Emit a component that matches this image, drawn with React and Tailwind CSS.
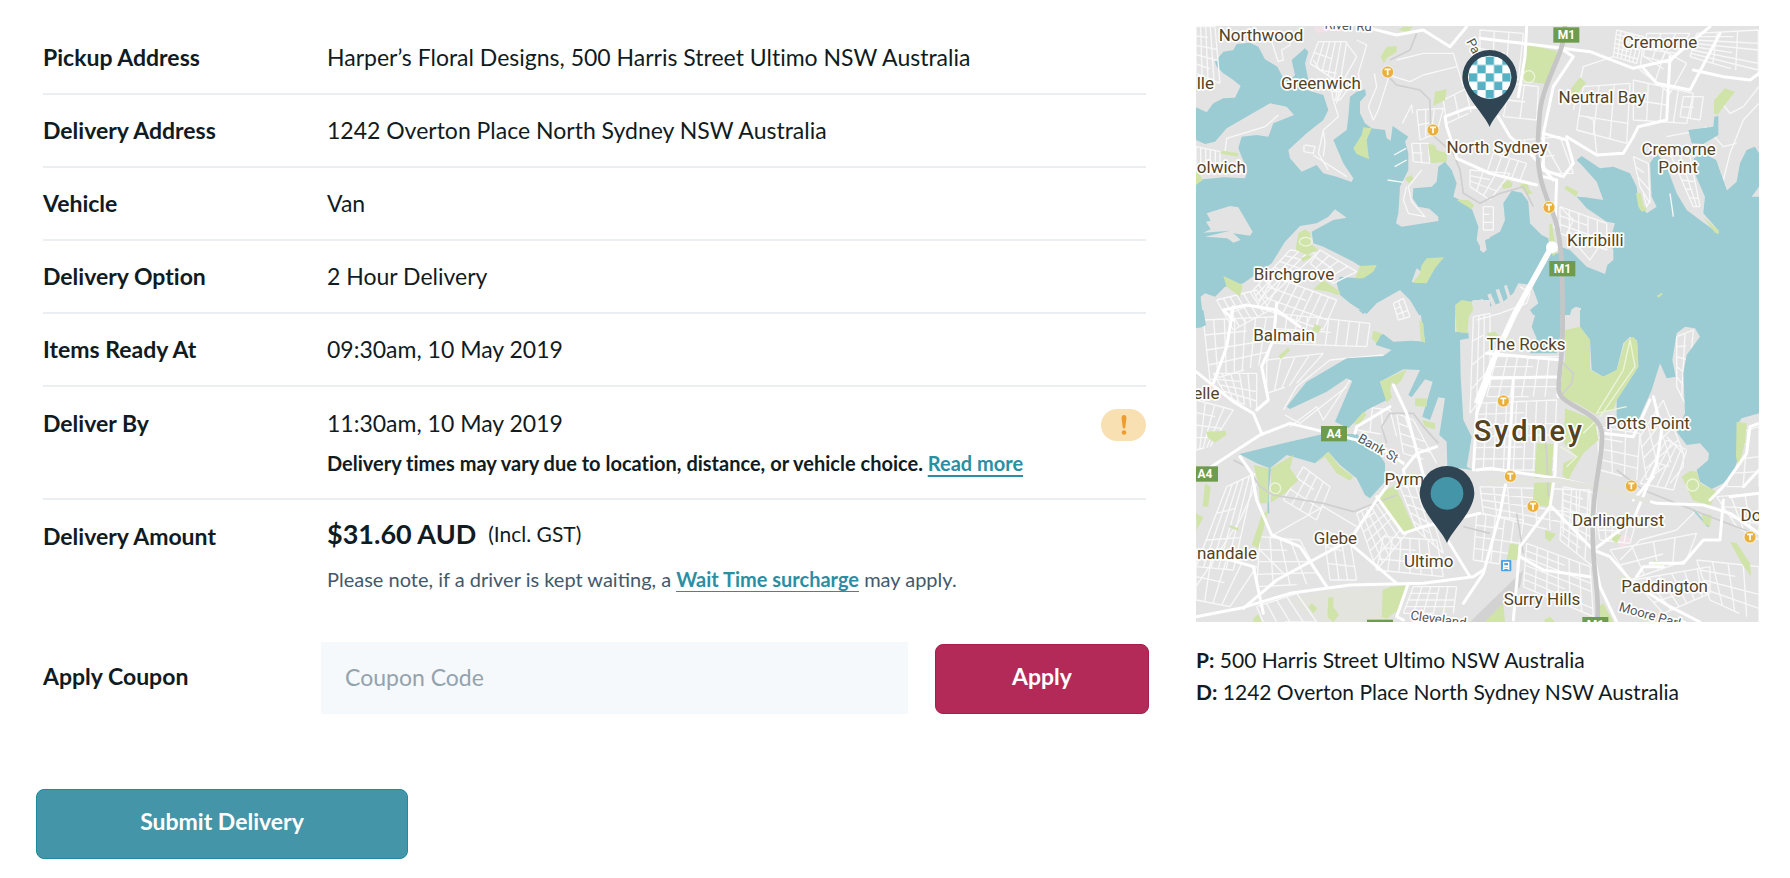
import React, { useState } from "react";

const details = [
  { label: "Pickup Address", value: "Harper’s Floral Designs, 500 Harris Street Ultimo NSW Australia" },
  { label: "Delivery Address", value: "1242 Overton Place North Sydney NSW Australia" },
  { label: "Vehicle", value: "Van" },
  { label: "Delivery Option", value: "2 Hour Delivery" },
  { label: "Items Ready At", value: "09:30am, 10 May 2019" },
];

// The map is split in four tiles: north west, north east, south west, south east
const tiles = [
  {
    key: "nw",
    transform: "translate(0 0)",
    land: [
      "18,18 18,262 50,277 70,250 100,235 135,233 152,198 130,180 100,160 80,140 75,125 100,95 130,90 140,72 180,68 205,80 225,118 262,140 280,175 300,180 315,165 305,120 345,85 355,95 345,130 355,180 350,210 400,225 415,270 400,300 350,340 295,390 300,415 335,455 380,435 400,460 440,470 485,486 490,475 460,430 430,360 470,330 475,290 480,230 500,215 525,208 528,225 510,245 510,280 525,310 545,325 585,330 590,355 602,362 608,318 655,350 645,365 655,400 655,450 640,480 630,500 625,580 618,610 635,620 745,603 745,590 718,566 685,560 668,535 670,505 725,500 740,485 745,440 765,425 785,450 800,490 790,530 820,545 845,565 865,620 860,660 880,698 890,690 885,660 900,655 900,18",
      "18,360 45,372 75,365 110,325 240,250 290,260 312,285 250,310 235,350 200,345 155,350 145,385 155,410 172,450 165,475 100,472 18,480",
      "50,580 120,558 145,562 188,635 180,647 130,640 152,660 130,668 112,655 45,650 120,632 40,638 62,628 48,605 62,602",
      "32,830 45,820 75,830 105,800 160,790 245,730 285,665 330,618 380,610 415,590 435,568 470,593 430,600 365,635 370,670 400,680 440,700 490,725 505,735 530,745 510,775 450,770 440,790 450,825 480,850 530,882 560,850 630,810 660,840 690,890 690,930 45,930 35,860",
      "665,785 680,745 700,760 690,790",
      "795,930 795,885 850,840 900,840 900,930",
    ],
    water: [],
    parks: [
      "572,110 590,80 620,78 620,95 590,115 582,130",
      "735,215 770,208 765,240 730,258",
      "490,385 515,345 520,322 545,325 530,360 537,418 500,402",
      "714,372 735,375 740,390 772,400 770,425 722,430",
      "800,540 835,540 852,555 845,568",
      "88,400 100,392 145,400 142,410",
      "18,440 38,480 18,495",
      "645,475 665,465 670,478 655,490",
      "318,680 325,640 345,628 362,640 362,670 385,690 350,705 318,690",
      "332,715 355,705 365,712 340,725",
      "100,768 158,795 150,830 110,800",
      "495,775 510,738 560,735 550,755 520,775",
      "370,808 400,780 450,815 445,826 415,815",
      "668,788 690,760 695,735 710,715 762,712 735,745 710,790",
      "797,900 795,855 815,840 845,845 850,870 835,890",
      "625,30 640,20 668,20 655,35",
    ],
  },
  {
    key: "ne",
    transform: "translate(840 0)",
    land: [
      "30,18 30,690 40,698 45,660 90,635 105,600 100,550 125,512 155,518 175,545 180,610 215,645 235,655 240,700 265,700 270,680 300,690 350,740 405,762 412,735 430,720 430,690 420,660 435,610 410,605 350,565 320,530 345,532 400,540 380,485 335,435 320,420 335,408 390,445 430,440 480,460 500,500 505,545 530,580 560,560 545,530 540,430 560,400 590,440 620,520 650,570 690,600 745,640 745,630 700,580 705,530 670,450 672,415 700,400 738,420 770,512 800,485 810,430 830,390 855,380 867,400 867,500 845,530 900,530 900,18",
      "30,930 30,870 100,845 130,820 145,790 185,795 205,850 180,870 200,900 195,930",
      "28,840 38,836 50,870 40,878",
      "52,824 62,820 80,860 70,870",
      "77,810 87,806 102,848 92,856",
      "102,798 110,794 122,830 114,838",
      "300,930 300,885 305,868 318,860 333,865 333,890 325,930",
    ],
    water: [
      "655,330 730,320 733,290 745,288 745,345 700,372 665,370",
      "840,525 845,480 855,380 835,395 812,430 803,485 772,515 738,420 705,405 675,420 672,450 706,530 702,580 747,632 840,640",
    ],
    parks: [
      "165,90 175,75 258,92 262,105 230,192 155,182",
      "295,215 330,172 348,188 320,225",
      "95,495 115,480 128,490 125,502 100,506",
      "148,495 172,488 178,510 188,520 170,525",
      "282,505 290,497 325,515 318,530",
      "498,520 512,518 520,555 532,570 515,575 505,560",
      "732,240 765,205 795,215 760,260 742,285 732,280",
      "238,612 246,612 260,700 248,708 238,660",
      "560,828 575,818 578,822 566,833",
      "700,592 745,630 747,642 735,638",
      "0,545 12,555 0,570",
    ],
  },
  {
    key: "sw",
    transform: "translate(0 870)",
    land: [],
    water: [
      "18,0 40,0 48,45 35,52 18,55",
      "505,0 535,0 520,12",
      "690,0 705,95 665,92 610,95 580,72 557,80 558,105 605,120 580,138 470,145 350,215 290,290 300,297 410,245 470,205 487,213 435,335 475,355 530,300 590,270 570,215 640,178 690,180 655,255 665,262 705,208 728,215 697,320 720,330 745,262 765,265 748,375 770,395 772,470 850,480 830,470 845,380 820,330 812,200 810,90 837,85 835,68 795,65 795,0",
      "148,432 280,400 400,372 500,372 560,420 585,460 585,515 540,565 525,555 500,505 450,465 415,425 375,460 290,435 240,475 200,460",
      "235,475 243,475 236,545 238,610 232,610",
      "612,835 640,830 628,852 616,856",
    ],
    parks: [
      "190,465 235,475 235,580 210,580 205,520",
      "243,475 310,435 300,475 325,510 285,550 243,578",
      "375,462 415,425 450,470 490,500 480,512 440,490 405,440",
      "555,560 615,525 675,660 645,672 620,650",
      "570,215 650,178 635,210 620,225 605,215 600,240 606,262 590,278",
      "675,265 710,265 710,290 675,288",
      "697,330 735,340 735,358 705,350",
      "490,340 520,305 530,315 505,345",
      "365,62 375,42 395,50 385,70",
      "266,138 295,112 300,122 272,148",
      "48,365 108,362 108,375 75,398 55,385",
      "545,85 550,62 575,70 560,100",
      "795,0 838,0 832,70 800,65",
      "688,30 700,40 705,100 692,90",
      "45,520 62,530 55,590 38,590",
      "18,610 40,622 20,660",
      "215,615 235,600 205,715 185,705",
      "118,645 145,655 145,662 118,652",
      "575,920 578,840 600,830 655,826 625,900 590,926",
      "355,890 365,880 382,895 370,910",
      "415,862 430,862 430,890 447,915 430,936 412,920",
      "190,925 205,912 215,936 190,936",
    ],
  },
  {
    key: "se",
    transform: "translate(840 870)",
    land: [],
    water: [
      "330,0 867,0 867,310 815,325 800,345 805,440 790,490 760,520 725,537 690,515 680,480 715,450 717,430 690,400 650,405 620,365 645,310 640,190 650,135 690,80 675,55 645,50 620,70 607,150 617,200 590,205 570,160 545,240 505,330 440,345 440,270 505,170 500,90 480,80 460,100 440,180 400,200 365,180 360,90 330,50",
      "200,0 272,0 272,70 260,130 180,130 200,85 185,50",
      "366,212 380,207 382,220 370,224",
      "672,598 718,650 712,650 670,602",
    ],
    parks: [
      "285,60 330,50 360,90 360,180 400,200 440,180 465,95 490,80 503,100 505,170 460,240 440,270 430,300 380,315 320,280 270,260 265,220 285,150",
      "285,295 375,330 385,390 340,430 310,480 295,510 277,495 280,460 320,440 282,400",
      "200,400 250,402 240,590 188,585",
      "635,500 660,482 680,485 690,520 740,545 720,590 668,570",
      "800,335 830,340 825,400 805,470 798,440",
      "50,70 75,65 90,80 60,90",
      "120,700 145,705 145,750 110,750",
      "225,660 258,672 240,695 225,685",
      "780,695 800,700 840,760 843,800 815,760",
      "695,610 725,615 720,650 700,640",
      "430,670 455,675 440,700 425,690",
      "550,750 580,760 575,770 555,768",
      "45,936 100,880 105,936",
      "222,930 240,920 255,936 225,936",
      "385,890 400,880 430,936 385,936",
    ],
  },
];

// Street blocks: four corners of a quad, then the number of streets each way
const blocks = [
  [18, 20, 75, 20, 90, 190, 18, 160, 4, 5],
  [385, 65, 470, 65, 450, 190, 360, 130, 5, 2],
  [420, 190, 490, 185, 450, 240, 430, 240, 3, 2],
  [665, 370, 715, 370, 720, 430, 670, 425, 2, 2],
  [680, 270, 760, 265, 740, 340, 690, 360, 3, 2],
  [760, 240, 860, 190, 880, 260, 770, 310, 3, 1],
  [840, 450, 960, 460, 900, 540, 840, 500, 3, 3],
  [300, 690, 380, 700, 210, 860, 190, 810, 3, 7],
  [390, 690, 500, 755, 430, 790, 360, 730, 4, 2],
  [250, 770, 440, 840, 400, 930, 200, 860, 8, 3],
  [80, 840, 200, 810, 240, 870, 130, 930, 6, 2],
  [610, 850, 640, 835, 660, 890, 625, 900, 2, 3],
  [18, 380, 90, 395, 90, 440, 18, 440, 5, 1],
  [870, 30, 1000, 40, 985, 180, 870, 140, 3, 2],
  [960, 190, 1045, 200, 1040, 300, 940, 290, 2, 2],
  [1280, 30, 1360, 50, 1340, 130, 1270, 110, 6, 6],
  [1370, 40, 1500, 40, 1440, 130, 1360, 110, 3, 3],
  [1520, 40, 1705, 30, 1705, 170, 1500, 110, 3, 7],
  [1180, 200, 1320, 190, 1310, 370, 1160, 330, 3, 3],
  [1330, 180, 1510, 220, 1490, 310, 1330, 300, 4, 2],
  [1360, 60, 1490, 130, 1440, 220, 1350, 150, 2, 2],
  [1480, 230, 1540, 230, 1530, 300, 1470, 290, 2, 2],
  [1440, 400, 1500, 410, 1530, 560, 1510, 560, 2, 6],
  [1330, 410, 1375, 430, 1380, 550, 1350, 500, 1, 3],
  [1110, 560, 1250, 610, 1250, 690, 1110, 640, 5, 3],
  [1000, 360, 1110, 350, 1150, 460, 1080, 460, 2, 2],
  [910, 400, 1010, 430, 990, 480, 890, 460, 4, 1],
  [880, 560, 910, 560, 910, 630, 880, 630, 1, 3],
  [40, 900, 260, 890, 230, 1030, 60, 1080, 7, 4],
  [70, 1060, 200, 1060, 200, 1170, 110, 1130, 5, 4],
  [260, 880, 540, 910, 530, 980, 250, 970, 9, 2],
  [230, 1020, 400, 1000, 320, 1090, 230, 1120, 4, 1],
  [18, 1140, 130, 1170, 60, 1280, 18, 1290, 4, 4],
  [110, 1400, 195, 1360, 130, 1650, 18, 1640, 5, 3],
  [18, 1600, 200, 1640, 120, 1760, 18, 1740, 4, 2],
  [210, 1550, 330, 1560, 400, 1690, 200, 1700, 4, 4],
  [340, 1340, 420, 1400, 380, 1500, 280, 1440, 4, 3],
  [400, 1530, 480, 1560, 500, 1680, 420, 1680, 3, 3],
  [500, 1480, 570, 1440, 650, 1540, 560, 1650, 5, 6],
  [520, 1160, 600, 1170, 620, 1250, 500, 1230, 3, 1],
  [620, 1180, 670, 1200, 740, 1330, 640, 1300, 2, 4],
  [630, 1400, 700, 1400, 760, 1600, 680, 1530, 3, 5],
  [580, 1550, 740, 1560, 760, 1670, 560, 1650, 6, 3],
  [670, 1700, 800, 1700, 790, 1780, 640, 1780, 5, 4],
  [320, 1720, 200, 1760, 220, 1806, 380, 1806, 4, 1],
  [850, 890, 900, 880, 900, 1100, 840, 1180, 3, 4],
  [920, 1010, 1110, 1010, 1100, 1130, 890, 1130, 6, 4],
  [860, 1150, 1100, 1140, 1090, 1350, 850, 1350, 8, 6],
  [870, 1400, 1200, 1410, 1200, 1560, 880, 1480, 8, 4],
  [1220, 1220, 1350, 1240, 1340, 1380, 1230, 1350, 3, 4],
  [1350, 1250, 1420, 1140, 1480, 1300, 1370, 1380, 3, 4],
  [1460, 950, 1510, 930, 1490, 1160, 1460, 1100, 2, 5],
  [1430, 1260, 1490, 1290, 1450, 1410, 1350, 1390, 4, 2],
  [1120, 1400, 1220, 1420, 1210, 1640, 1110, 1560, 4, 8],
  [1010, 1570, 1200, 1640, 1210, 1790, 1000, 1700, 6, 6],
  [860, 1480, 1000, 1500, 980, 1640, 850, 1620, 5, 4],
  [1220, 1500, 1340, 1500, 1320, 1570, 1230, 1560, 5, 2],
  [1260, 1590, 1520, 1540, 1490, 1620, 1320, 1680, 4, 2],
  [1520, 1620, 1707, 1640, 1707, 1806, 1560, 1740, 4, 4],
  [1330, 1680, 1560, 1640, 1560, 1720, 1420, 1780, 6, 3],
  [1640, 1240, 1707, 1220, 1707, 1400, 1610, 1400, 2, 4],
  [1580, 1430, 1707, 1420, 1707, 1560, 1640, 1520, 3, 3],
];

const minorRoads = [
  "M240 50 265 125 280 120 275 90 300 75 305 30",
  "M500 60 530 75 520 110 505 160 510 190",
  "M370 120 390 150 440 160 M470 70 500 110 450 200 440 250",
  "M430 240 445 290 400 330 385 400 415 450 M345 375 375 380 370 400 342 395 342 375 M400 330 405 370 400 410 M370 405 470 470",
  "M553 160 560 200 535 260 550 300 565 270 595 175",
  "M265 285 225 320 110 355 105 395",
  "M637 310 665 255 668 280",
  "M612 405 648 385 M614 440 650 420 M593 480 640 487",
  "M650 500 640 540 655 580 705 590 665 545 655 500 695 450",
  "M595 165 660 185 700 165 800 140 M620 120 700 100 790 100 820 200",
  "M1150 270 1180 140 1270 110 M1190 290 1210 300 1220 400",
  "M1360 520 1370 560 1380 540",
  "M1110 560 1150 600 1130 640 1200 720 1240 660",
  "M1600 480 1620 400 1660 300 1707 250 M1580 230 1620 280 1660 260 1707 200 M1545 320 1600 380 1640 370",
  "M1450 590 1440 520 M1430 350 1480 340 1560 330",
  "M280 1170 320 1100 420 1020 580 1005 M285 1185 330 1210 470 1100",
  "M300 1220 380 1160 400 1200 480 1080",
  "M860 900 930 880 1010 850 1020 820 990 800",
  "M1430 1250 1480 1300 1480 1340 1440 1390",
  "M200 1390 150 1500 18 1700",
  "M210 1590 280 1660 M240 1550 400 1460 500 1520",
  "M1290 1620 1350 1560 1460 1530 1520 1470",
];

// Paths that run through the parks
const parkPaths = [
  "M330 660a18 12 0 1 0 35 10a18 12 0 1 0-35-10",
  "M1310 1160 1220 1180 1300 1050 1320 960 1335 1040 1230 1190",
  "M1180 1240 1220 1200 M1110 1280 1160 1310 1130 1340",
  "M1490 1395a18 18 0 1 0 36 0a18 18 0 1 0-36 0",
  "M998 170a18 18 0 1 0 36 0a18 18 0 1 0-36 0",
  "M240 1405a16 16 0 1 0 32 0a16 16 0 1 0-32 0",
];

const mainRoads = [
  "M520 20 620 45 700 30 780 80 830 20",
  "M770 320 765 290 830 265 870 260 M770 320 790 380 800 415 900 460 1040 495",
  "M870 55 1080 80 1200 95 1330 145 1440 120 1560 20",
  "M1010 20 1005 110 985 230 M925 290 960 350 1030 410 1090 480",
  "M1120 90 1150 110 1090 200 1060 340 1060 450 1120 470 1150 430 1130 360 1060 340",
  "M1360 145 1400 190 1500 210 1590 40 M1440 110 1430 300 1345 320 1330 350 1300 400 1220 405 1130 350",
  "M1510 150 1600 170 1680 180 1707 160 M1060 470 1100 480 1095 620",
  "M130 900 100 870 170 855 260 870 330 920 M260 850 250 960 215 1040 235 1140 200 1170",
  "M18 1055 130 1145 190 1180 215 1240",
  "M130 860 110 980 70 1090",
  "M18 1370 80 1330 210 1245 300 1210 400 1235 500 1260 580 1290 640 1330",
  "M150 1310 185 1360 200 1440 245 1545 330 1580 410 1700",
  "M18 1790 150 1765 300 1720 480 1695 700 1690 850 1670 880 1650",
  "M160 1765 260 1680 480 1560 560 1440 590 1400",
  "M18 1590 190 1640 220 1780 M480 1570 620 1690",
  "M610 1095 650 1180 720 1440 760 1540 840 1670",
  "M495 1240 500 1220 600 1160 M740 1280 680 1300 640 1350 650 1400",
  "M560 1430 640 1540 700 1520 870 1480",
  "M860 1350 900 1345 1100 1375 1260 1410 1330 1430 1400 1450 1540 1455 1620 1480 1707 1540",
  "M900 1070 860 1180 850 1350 M890 1000 1115 1020 1105 1130 M900 1075 1110 1070",
  "M970 1080 955 1350 930 1480 880 1660 820 1750 M1100 1240 1095 1360 1080 1460 990 1580 970 1800",
  "M1085 1460 1210 1590 1260 1610 1330 1690 1440 1760 1530 1806",
  "M1210 1590 1330 1500 1400 1330 1415 1230 1390 1130",
  "M1240 1240 1330 1250 1380 1140 M1330 1440 1390 1370",
  "M1210 1600 1230 1700 1280 1806 M1420 1640 1360 1640 1340 1670",
  "M1600 1440 1590 1560 1540 1560 1480 1630 1380 1630",
  "M1560 1440 1600 1400 1670 1300 1680 1220 1707 1210 M1660 1400 1707 1350 M1620 1430 1707 1420",
  "M990 1610 1060 1650 1200 1670",
  "M655 1690 620 1790 640 1800",
];

const labels = [
  ["Northwood", 213, 64],
  ["lle", 46, 208],
  ["Greenwich", 393, 207],
  ["olwich", 94, 458],
  ["North Sydney", 921, 400],
  ["Cremorne", 1410, 84],
  ["Neutral Bay", 1236, 248],
  ["Cremorne", 1466, 406],
  ["Point", 1464, 458],
  ["Kirribilli", 1216, 677],
  ["Birchgrove", 312, 781],
  ["Balmain", 282, 962],
  ["elle", 49, 1136],
  ["The Rocks", 1008, 989],
  ["Potts Point", 1374, 1226],
  ["Darlinghurst", 1284, 1519],
  ["Glebe", 436, 1571],
  ["nandale", 111, 1618],
  ["Ultimo", 716, 1641],
  ["Pyrmont", 680, 1394],
  ["Surry Hills", 1056, 1756],
  ["Paddington", 1424, 1717],
  ["Do", 1683, 1504],
];

const stations = [
  [593, 156], [729, 330], [1077, 562], [940, 1143], [961, 1369], [1029, 1459], [1324, 1398], [1680, 1551],
];

const shields = [
  ["M1", 1129, 45], ["M1", 1117, 746], ["A4", 432, 1241], ["A4", 45, 1362], ["A22", 570, 1822], ["M1", 1216, 1814],
];

function streetPath([ax, ay, bx, by, cx, cy, dx, dy, cols, rows]) {
  const mix = (p, q, t) => Math.round(p + (q - p) * t);
  let d = "";
  for (let i = 0; i <= cols; i++) {
    const t = i / cols;
    d += `M${mix(ax, bx, t)} ${mix(ay, by, t)}L${mix(dx, cx, t)} ${mix(dy, cy, t)}`;
  }
  for (let i = 0; i <= rows; i++) {
    const t = i / rows;
    // leave some gaps so the cross streets do not all run through
    const end = i % 3 === 1 ? 0.6 : 1;
    const x = mix(ax, dx, t);
    const y = mix(ay, dy, t);
    d += `M${x} ${y}L${mix(x, mix(bx, cx, t), end)} ${mix(y, mix(by, cy, t), end)}`;
  }
  return d;
}

function Pin({ x, y, children }) {
  return (
    <g transform={`translate(${x} ${y})`}>
      <path d="M0 149C-14 112-82 52-82 0A82 82 0 0 1 82 0C82 52 14 112 0 149Z" fill="#2f4553" />
      {children}
    </g>
  );
}

function DeliveryMap() {
  return (
    <svg viewBox="18 18 1689 1788" className="block h-auto w-full" role="img" aria-label="Map of the pickup and delivery addresses">
      <defs>
        <pattern id="checks" width="50" height="50" x="-12" y="-12" patternUnits="userSpaceOnUse">
          <rect width="50" height="50" fill="#55b2c5" />
          <path d="M25 0h25v25h-25zM0 25h25v25h-25z" fill="#fff" />
        </pattern>
      </defs>

      <rect x="18" y="18" width="1689" height="870" fill="#9bccd3" />
      <rect x="18" y="885" width="1689" height="921" fill="#e3e3e3" />
      {tiles.map((tile) => (
        <g key={tile.key} transform={tile.transform} fill="#e3e3e3">
          {tile.land.map((points) => <polygon key={points} points={points} />)}
        </g>
      ))}
      <path d="M300 1740 420 1710 590 1705 580 1806H380Z" fill="#e3e4dd" />
      <path d="M372 20h50l-5 15-35 5zM1282 1560l20-20 25 20-35 30z" fill="#f2e1e7" />
      <path d="M840 1806 1000 1650 990 1700 890 1806Z" fill="#d2d2d2" />

      <g fill="none" stroke="#f8f8f8" strokeWidth="4" strokeLinejoin="round">
        {blocks.map((block, i) => <path key={i} d={streetPath(block)} />)}
        {minorRoads.map((d) => <path key={d} d={d} />)}
      </g>

      {tiles.map((tile) => (
        <g key={tile.key} transform={tile.transform}>
          {tile.water.map((points) => <polygon key={points} points={points} fill="#9bccd3" />)}
          {tile.parks.map((points) => <polygon key={points} points={points} fill="#d0e4a9" />)}
        </g>
      ))}
      <g fill="none" stroke="#edf4dc" strokeWidth="4">
        {parkPaths.map((d) => <path key={d} d={d} />)}
      </g>

      <g fill="none" stroke="#cfcfcf" strokeWidth="5">
        <path d="M595 170 620 195 690 210 720 240 722 340 790 400 810 450 820 520 870 550 930 520 1000 500 1030 560" />
        <path d="M600 120 660 90 680 40 M590 1270 575 1220 600 1180 670 1180 700 1220 745 1270" />
        <path d="M130 1320 170 1340 210 1400 250 1425 400 1450 490 1475 620 1425" />
        <path d="M980 1480 990 1540 1000 1600 M1075 1430 1070 1300 1060 1210" />
        <path d="M1280 1350 1360 1410 1560 1490 1690 1540 M820 1520 900 1540" />
        <path d="M1120 1030 1150 1060 1145 1090 1115 1125" />
      </g>
      <g fill="none" stroke="#fff" strokeWidth="9" strokeLinejoin="round" strokeLinecap="round">
        {mainRoads.map((d) => <path key={d} d={d} />)}
      </g>
      <path d="M1085 680 975 880 910 1020 860 1150" fill="none" stroke="#fff" strokeWidth="17" />
      <circle cx="1086" cy="682" r="18" fill="#fff" />
      <path d="M890 1385 1100 1380 1260 1410 1380 1445" fill="none" stroke="#e3e4dd" strokeWidth="14" />
      <path
        d="M1125 18C1125 110 1050 190 1048 300C1035 440 1050 490 1085 570C1115 640 1118 730 1118 900C1120 1010 1105 1060 1106 1110C1110 1160 1230 1170 1236 1240C1240 1320 1205 1400 1208 1540C1210 1680 1230 1720 1222 1806"
        fill="none"
        stroke="#c6c6c6"
        strokeWidth="14"
      />

      <g fontFamily="Roboto, sans-serif" textAnchor="middle" stroke="#fff" strokeWidth="10" strokeLinejoin="round" paintOrder="stroke">
        <g fontSize="51" fill="#54431f">
          {labels.map(([text, x, y]) => <text key={`${text}-${y}`} x={x} y={y}>{text}</text>)}
        </g>
        <g fontSize="39" fill="#555">
          <text x="565" y="1298" transform="rotate(30 565 1285)">Bank St</text>
          <text x="1385" y="1796" transform="rotate(16 1370 1785)">Moore Park</text>
          <text x="745" y="1810" transform="rotate(8 740 1800)">Cleveland</text>
          <text x="474" y="30" transform="rotate(3 474 30)">River Rd</text>
          <text x="865" y="110" transform="rotate(62 855 105)">Pacific</text>
        </g>
        <text x="1018" y="1262" fontSize="87" fontWeight="500" fill="#54431f" className="tracking-widest">Sydney</text>
      </g>

      {shields.map(([text, x, y]) => (
        <g key={`${x}-${y}`}>
          <rect x={x - 39} y={y - 23} width="78" height="46" fill="#6f9b4c" />
          <text x={x} y={y + 13} fontFamily="Roboto, sans-serif" fontSize="36" fontWeight="700" fill="#fff" textAnchor="middle">{text}</text>
        </g>
      ))}
      {stations.map(([x, y]) => (
        <g key={`${x}-${y}`}>
          <circle cx={x} cy={y} r="18" fill="#e9b13b" stroke="#fff" strokeWidth="2" />
          <path d={`M${x - 9} ${y - 8}h18M${x} ${y - 8}v18`} stroke="#fff" strokeWidth="5" />
        </g>
      ))}
      <g transform="translate(933 1620)">
        <rect width="31" height="34" rx="3" fill="#4ba3e8" />
        <path d="M8 7h15v18H8zM6 29l4-4M25 29l-4-4" fill="none" stroke="#fff" strokeWidth="4" />
        <path d="M8 16h15v6H8z" fill="#fff" />
      </g>

      <Pin x={899} y={172}>
        <circle r="65" fill="url(#checks)" />
      </Pin>
      <Pin x={771} y={1420}>
        <circle r="49" fill="#4495a8" />
      </Pin>
    </svg>
  );
}

export default function App() {
  const [coupon, setCoupon] = useState("");

  return (
    <main className="min-h-screen bg-white pt-[22px] pr-[31px] pb-5 pl-9 font-['Lato',sans-serif] text-[#101b22]">
      <div className="grid grid-cols-[1113fr_563fr] gap-[47px]">
        <form onSubmit={(e) => e.preventDefault()}>
          <dl className="mr-[3px] ml-[7px] text-[23px] leading-7 [font-variant-ligatures:none]">
            {details.map((item) => (
              <div key={item.label} className="flex h-[73px] items-center border-b-2 border-[#eceff1] pb-0.5">
                <dt className="w-[284px] shrink-0 font-bold">{item.label}</dt>
                <dd>{item.value}</dd>
              </div>
            ))}
            <div className="flex h-[113px] border-b-2 border-[#eceff1] pt-[22px]">
              <dt className="w-[284px] shrink-0 font-bold">Deliver By</dt>
              <dd className="flex-1">
                <div className="flex justify-between">
                  <span>11:30am, 10 May 2019</span>
                  <span className="flex h-8 w-[45px] items-center justify-center rounded-full bg-[#f9e0b3]">
                    <svg viewBox="0 0 8 20" className="h-5 w-2 fill-[#ef9c2e]" aria-hidden="true">
                      <path d="M4 0C6 0 6.600 1.500 6.400 4L5.200 12.500C5 13.800 3 13.800 2.800 12.500L1.600 4C1.400 1.500 2 0 4 0Z" />
                      <circle cx="4" cy="17.500" r="2.300" />
                    </svg>
                  </span>
                </div>
                <p className="mt-2 text-xl leading-7 font-bold">
                  Delivery times may vary due to location, distance, or vehicle choice.{" "}
                  <a href="#times" className="text-[#2b8fa3] underline underline-offset-4">Read more</a>
                </p>
              </dd>
            </div>
            <div className="flex h-[142px] pt-5">
              <dt className="w-[284px] shrink-0 pt-0.5 font-bold">Delivery Amount</dt>
              <dd>
                <p>
                  <strong className="text-[27px]">$31.60 AUD</strong>
                  <span className="ml-3 align-[2px] text-[21px]">(Incl. GST)</span>
                </p>
                <p className="mt-4 text-xl leading-7 text-[#43596b] [font-variant-ligatures:normal]">
                  Please note, if a driver is kept waiting, a{" "}
                  <a href="#surcharge" className="border-b border-[#2b8fa3] font-bold text-[#2b8fa3]">Wait Time surcharge</a>{" "}
                  may apply.
                </p>
              </dd>
            </div>
          </dl>

          <div className="flex items-end">
            <label htmlFor="coupon" className="w-[285px] shrink-0 self-center pb-1 pl-[7px] text-[23px] font-bold">Apply Coupon</label>
            <input
              id="coupon"
              name="coupon"
              value={coupon}
              onChange={(e) => setCoupon(e.target.value)}
              placeholder="Coupon Code"
              className="h-[72px] min-w-0 flex-1 bg-[#f6f9fb] px-6 pb-0.5 text-[23px] outline-none placeholder:text-[#93a3ae]"
            />
            <button type="button" className="ml-[27px] h-[70px] w-[214px] rounded-lg border border-[#a81d4c] bg-[#b32a59] pb-1.5 text-[23px] font-bold text-white">
              Apply
            </button>
          </div>

          <button type="submit" className="mt-[75px] h-[70px] w-[372px] rounded-lg border border-[#1f8a9f] bg-[#4495a8] pb-1.5 text-[23px] font-bold text-white">
            Submit Delivery
          </button>
        </form>

        <aside className="pt-1">
          <DeliveryMap />
          <div className="mt-[22px] text-[21px] leading-8 [font-variant-ligatures:none]">
            <p><strong>P:</strong> 500 Harris Street Ultimo NSW Australia</p>
            <p><strong>D:</strong> 1242 Overton Place North Sydney NSW Australia</p>
          </div>
        </aside>
      </div>
    </main>
  );
}
